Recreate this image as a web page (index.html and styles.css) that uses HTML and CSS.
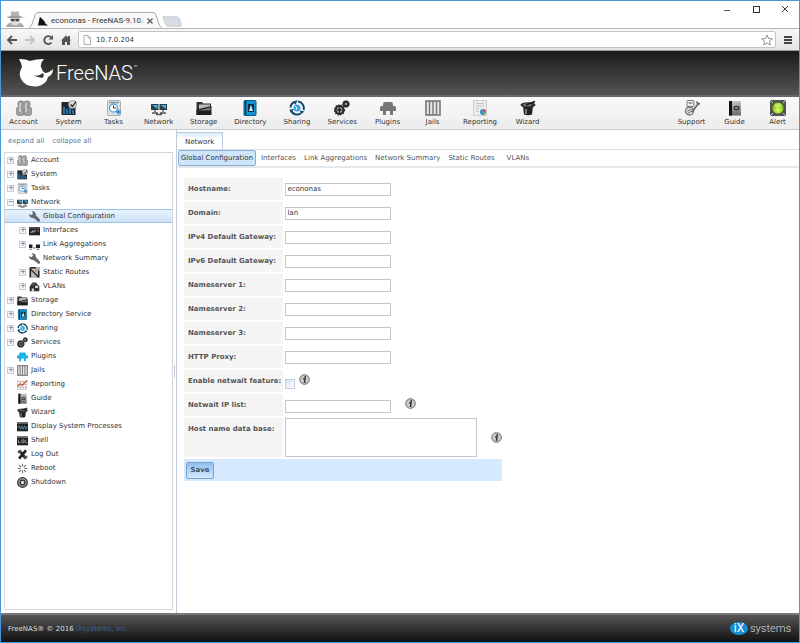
FILE: index.html
```html
<!DOCTYPE html>
<html lang="en">
  <head>
    <meta charset="UTF-8" />
    <meta name="viewport" content="width=device-width, initial-scale=1.0" />
    <title>econonas - FreeNAS-9.10</title>
    <link rel="stylesheet" href="styles.css">
  </head>
  <body>
    <!-- icon set -->
    <svg class="icon-set" xmlns="http://www.w3.org/2000/svg">
      <defs>
        <linearGradient id="steel" x1="0" y1="0" x2="0" y2="1">
          <stop offset="0" stop-color="#c4c4c4" />
          <stop offset="1" stop-color="#666" />
        </linearGradient>
        <radialGradient id="lime" cx="0.5" cy="0.65" r="0.6">
          <stop offset="0" stop-color="#e3ff6a" />
          <stop offset="1" stop-color="#5fae00" />
        </radialGradient>
      </defs>
      <symbol id="i-account" viewBox="0 0 16 16">
        <g fill="#a0a0a0" stroke="#757575" stroke-width="0.6">
          <circle cx="5" cy="4" r="3.3" />
          <circle cx="11" cy="4" r="3.3" />
          <rect x="0.5" y="7" width="7.5" height="8.5" rx="2" />
          <rect x="8" y="7" width="7.5" height="8.5" rx="2" />
        </g>
        <path d="M4 3v9M10 3v9" stroke="#d6d6d6" stroke-width="1.5" />
      </symbol>
      <symbol id="i-system" viewBox="0 0 16 16">
        <rect x="0.5" y="2" width="14" height="13" fill="#1d2a33" />
        <path d="M3 14V7M6 14V9M9 14V7M12 14v-4" stroke="#2f87c4" stroke-width="1.6" />
        <circle cx="11.5" cy="4.5" r="4" fill="#ddd" stroke="#777" stroke-width="0.7" />
        <path d="M9.5 4.5l2 2 3.5-5" fill="none" stroke="#222" stroke-width="1.3" />
      </symbol>
      <symbol id="i-tasks" viewBox="0 0 16 16">
        <rect x="1.5" y="0.5" width="13" height="15" rx="1" fill="#dbe2e5" stroke="#a9b1b5" />
        <path d="M3 2.5h10" stroke="#8a9499" stroke-width="1.4" />
        <circle cx="7.5" cy="8" r="4" fill="#fff" stroke="#5ba2d2" stroke-width="1.3" />
        <path d="M7.5 5.500V8H10" fill="none" stroke="#333" />
        <path d="M10 12h5M12.5 9.500v5" stroke="#2b86cc" stroke-width="1.6" />
      </symbol>
      <symbol id="i-network" viewBox="0 0 16 16">
        <rect x="0" y="4" width="7.5" height="6" fill="#2d3b45" />
        <rect x="8.5" y="4" width="7.5" height="6" fill="#2d3b45" />
        <path d="M1 5h5.500v4zM9.500 5H15v4z" fill="#38b2ec" />
        <path d="M3 10h2v2H3zM11 10h2v2h-2z" fill="#888" />
        <path d="M1 13h6M9 13h6M5 14.500h6" stroke="#555" stroke-width="1.5" />
      </symbol>
      <symbol id="i-storage" viewBox="0 0 16 16">
        <path d="M0.500 2H6l1 1.500h8V15H0.500z" fill="#333" />
        <path d="M3 4.500h11V10H3z" fill="#bcbcbc" />
        <path d="M0.500 15V9.500L15.500 6v9z" fill="#1e1e1e" />
        <path d="M1.500 10.500l13-3v3z" fill="#777" />
      </symbol>
      <symbol id="i-directory" viewBox="0 0 16 16">
        <rect x="2" y="0.5" width="12" height="15" rx="1" fill="#1591cf" stroke="#075b86" />
        <path d="M3.500 1v14" stroke="#063e5b" stroke-width="1.5" />
        <rect x="6" y="4" width="6" height="8" fill="#0d2c3c" />
        <path d="M9 4.500L7 11h4z" fill="#c7ecfb" />
      </symbol>
      <symbol id="i-sharing" viewBox="0 0 16 16">
        <path d="M9 1.500a6.500 6.500 0 0 1 5.500 8.500M11.500 13.500a6.500 6.500 0 0 1-9.500-3M1.500 7.500A6.500 6.500 0 0 1 5.500 2" fill="none" stroke="#124a68" stroke-width="2" />
        <path d="M8.500 0L4.500 1.500l2 3.500zM15.500 11.500l-4 3-.5-4zM.5 9.500L5 9l-3 4z" fill="#124a68" />
        <circle cx="8" cy="8" r="3.5" fill="#37a5e2" />
        <path d="M6 6l2 2-1 2" stroke="#e9f7ff" fill="none" />
      </symbol>
      <symbol id="i-services" viewBox="0 0 16 16">
        <g fill="#999" stroke="#2a2a2a">
          <circle cx="5.5" cy="10" r="4" stroke-width="2" />
          <circle cx="5.5" cy="10" r="5" fill="none" stroke-width="1.2" stroke-dasharray="1.5 1.2" />
          <circle cx="12" cy="4" r="2.3" stroke-width="2" />
          <circle cx="12" cy="4" r="3.3" fill="none" stroke-width="1" stroke-dasharray="1.3 1" />
        </g>
        <path d="M5.500 6.500v7M2 10h7" stroke="#333" />
        <circle cx="5.5" cy="10" r="1.4" fill="#222" />
      </symbol>
      <symbol id="i-plugins" viewBox="0 0 16 16">
        <path d="M3 4q0-2 2-2h6q2 0 2 2v2h2q1 0 1 2v3h-3v4h-3v-4H6v4H3v-4H0V8q0-2 1-2h2z" fill="currentColor" />
      </symbol>
      <symbol id="i-jails" viewBox="0 0 16 16">
        <rect x="1" y="1" width="14" height="14" fill="#e7e7e7" stroke="#777" stroke-width="1.6" />
        <path d="M4.500 1v14M8 1v14M11.500 1v14" stroke="#777" stroke-width="1.4" />
      </symbol>
      <symbol id="i-reporting" viewBox="0 0 16 16">
        <rect x="1.5" y="0.5" width="13" height="15" fill="#ececec" stroke="#cdcdcd" />
        <path d="M4 3.500h8M4 6h8M4 8.500h3M4 11h3" stroke="#c3c3c3" />
        <circle cx="11" cy="12" r="3" fill="#3c8bd6" />
        <path d="M11 12V9a3 3 0 0 1 3 3z" fill="#e4572e" />
        <path d="M11 12h3a3 3 0 0 1-3 3z" fill="#6bb536" />
      </symbol>
      <symbol id="i-chart" viewBox="0 0 16 16">
        <path d="M1 1v14h14M5 2v13M9 2v13M13 2v13M1 4h14M1 8h14M1 12h14" fill="none" stroke="#9b9b9b" stroke-width="0.8" />
        <path d="M0.500 11L4.500 7l3 2L15 2" fill="none" stroke="#d64b36" stroke-width="1.6" />
      </symbol>
      <symbol id="i-wizard" viewBox="0 0 16 16">
        <path d="M3 6h10l-1 8.500q-4 1.500-8 0z" fill="#222" />
        <path d="M6 9v5" stroke="#999" stroke-width="1.5" />
        <ellipse cx="8" cy="5" rx="7.5" ry="2.7" fill="#333" />
        <ellipse cx="7.5" cy="4.8" rx="4" ry="1.2" fill="#888" />
        <path d="M6 5L15 1.500" stroke="#111" stroke-width="1.6" />
      </symbol>
      <symbol id="i-support" viewBox="0 0 16 16">
        <rect x="3" y="0.5" width="7" height="6" rx="1" fill="#eee" stroke="#777" />
        <path d="M4.500 3h4" stroke="#555" />
        <circle cx="5.5" cy="11" r="4" fill="#ddd" stroke="#777" stroke-width="1.3" />
        <path d="M3.500 11l4-2M4 13l4-2" stroke="#777" />
        <path d="M8 12l6-8M13 1.500q0 3 3 2" fill="none" stroke="#666" stroke-width="1.8" />
      </symbol>
      <symbol id="i-guide" viewBox="0 0 16 16">
        <rect x="2" y="1" width="12" height="14.5" fill="url(#steel)" />
        <path d="M3.500 1v14.500" stroke="#111" stroke-width="3" />
        <ellipse cx="9.5" cy="8" rx="3" ry="2.3" fill="#333" />
        <path d="M8 8h3" stroke="#ddd" />
      </symbol>
      <symbol id="i-alert" viewBox="0 0 16 16">
        <rect width="16" height="16" fill="#555" />
        <path d="M0 0l3 3M16 0l-3 3M0 16l3-3M16 16l-3-3" stroke="#ccc" />
        <circle cx="8" cy="8" r="6.2" fill="url(#lime)" stroke="#444" />
        <ellipse cx="8" cy="5" rx="3.5" ry="2" fill="#e4f9a0" opacity="0.6" />
      </symbol>
      <symbol id="i-wrench" viewBox="0 0 16 16">
        <path d="M0 4.500l3 1.500L6 4 4 .5Q10 0 10 6l5.500 6q1.500 3-1.500 4L7 10.500Q0 10.500 0 4.500z" fill="#666" />
      </symbol>
      <symbol id="i-interfaces" viewBox="0 0 16 16">
        <rect y="3" width="16" height="12" fill="#222" />
        <path d="M0 4.500h16" stroke="#888" />
        <path d="M2 10.500h3V8M7 11V8.500h3M12 8.500h2" fill="none" stroke="#ddd" stroke-width="1.2" />
      </symbol>
      <symbol id="i-link" viewBox="0 0 16 16">
        <path d="M0 8h5v5H0zM10 8h6v5h-6z" fill="#222" />
        <path d="M1 15h3M11 15h4M6 13h3" stroke="#555" stroke-width="1.5" />
      </symbol>
      <symbol id="i-routes" viewBox="0 0 16 16">
        <rect width="16" height="16" fill="#bbb" />
        <path d="M1 2l13 13M2 1h8M2 3v12M14 5v9" stroke="#222" stroke-width="2" />
        <path d="M8 8l5-6" stroke="#c44" />
      </symbol>
      <symbol id="i-vlans" viewBox="0 0 16 16">
        <path d="M1 8l4-6h5l5 6v7H1z" fill="#333" />
        <path d="M4 15v-4h3v4M9 7h4v3H9z" fill="#ddd" />
        <path d="M5 5l3-1" stroke="#aaa" />
      </symbol>
      <symbol id="i-processes" viewBox="0 0 16 16">
        <rect y="2" width="16" height="13" fill="#222" />
        <path d="M0 3.500h16" stroke="#888" />
        <path d="M1 10l2-3 2 5 2-5 2 5 2-5 2 5 2-4" fill="none" stroke="#4f9fae" stroke-width="1.2" />
      </symbol>
      <symbol id="i-shell" viewBox="0 0 16 16">
        <rect y="2" width="16" height="13" fill="#222" />
        <path d="M0 3.500h16" stroke="#999" />
        <path d="M2 7v4h3M7 7h3v4H7zM12 7v4h3" fill="none" stroke="#bbb" />
      </symbol>
      <symbol id="i-logout" viewBox="0 0 16 16">
        <path d="M3 2l10 12M13 2L3 14" stroke="#222" stroke-width="4" />
        <path d="M1 5l5-2M10 13l5-2" stroke="#555" stroke-width="3" />
      </symbol>
      <symbol id="i-reboot" viewBox="0 0 16 16">
        <path d="M8 1v4M8 11v4M1 8h4M11 8h4M3 3l3 3M10 10l3 3M13 3l-3 3M6 10l-3 3" stroke="#666" stroke-width="1.5" />
      </symbol>
      <symbol id="i-shutdown" viewBox="0 0 16 16">
        <circle cx="8" cy="8" r="7" fill="#aaa" stroke="#333" stroke-width="1.8" />
        <circle cx="8" cy="8" r="3.5" fill="#ddd" stroke="#333" stroke-width="2" />
      </symbol>
      <symbol id="i-info" viewBox="0 0 16 16">
        <circle cx="8" cy="8" r="7" fill="#c9c9c9" stroke="#6a6a6a" stroke-width="1.4" />
        <circle cx="9" cy="4.3" r="1.3" fill="#222" />
        <path d="M6 7h3l-1.200 5h2" fill="none" stroke="#222" stroke-width="1.7" />
      </symbol>
    </svg>

    <div class="window">
      <header class="titlebar">
        <svg class="incognito" viewBox="0 0 24 20">
          <path d="M2 19q1-4 6-5h8q5 1 6 5z" fill="#a9a9a9" />
          <circle cx="12" cy="11" r="6" fill="#dedede" />
          <path d="M7 7l1-6q4 2 8 0l1 6z" fill="#b5b5b5" />
          <path d="M2 8q10-3 20 0-10 3-20 0z" fill="#9c9c9c" />
          <path d="M7 10h4.500v2.500H8zM12.500 10H17l-1 2.500h-3.500z" fill="#444" />
        </svg>
        <div class="browser-tab">
          <svg class="tab-edge" viewBox="0 0 9 16" preserveAspectRatio="none">
            <path d="M0 15.500Q2 15 3 12L6 3Q7 .5 9 .5V16H0z" fill="#f8f8f8" />
            <path d="M0 15.500Q2 15 3 12L6 3Q7 .5 9 .5" fill="none" stroke="#aaa" />
          </svg>
          <div class="tab-body">
            <svg class="favicon" viewBox="0 0 16 16"><path d="M0 15L3 1l7 7 2 4 4 3z" fill="#111" /></svg>
            <span class="tab-title">econonas - FreeNAS-9.10.</span>
            <button class="icon-button tab-close" aria-label="Close tab">
              <svg viewBox="0 0 8 8"><path d="M1.500 1.500l5 5M6.500 1.500l-5 5" stroke="#555" stroke-width="1.2" /></svg>
            </button>
          </div>
          <svg class="tab-edge flip" viewBox="0 0 9 16" preserveAspectRatio="none">
            <path d="M0 15.500Q2 15 3 12L6 3Q7 .5 9 .5V16H0z" fill="#f8f8f8" />
            <path d="M0 15.500Q2 15 3 12L6 3Q7 .5 9 .5" fill="none" stroke="#aaa" />
          </svg>
        </div>
        <button class="new-tab" aria-label="New tab">
          <svg viewBox="0 0 20 11"><path d="M1 .5h14q2 0 3 3l1.500 5q.5 2-1.500 2H6q-2 0-3-3L1 2z" fill="#d5dce4" stroke="#c6ccd4" stroke-width="0.7" /></svg>
        </button>
        <div class="window-controls">
          <button class="icon-button" aria-label="Minimize"><svg viewBox="0 0 8 8"><path d="M1 5.500h6" stroke="#555" /></svg></button>
          <button class="icon-button" aria-label="Maximize"><svg viewBox="0 0 8 8"><rect x="1.5" y="1.5" width="6" height="6" fill="none" stroke="#333" /></svg></button>
          <button class="icon-button" aria-label="Close"><svg viewBox="0 0 8 8"><path d="M1 1l6 6M7 1L1 7" stroke="#333" /></svg></button>
        </div>
      </header>

      <div class="toolbar">
        <button class="icon-button" aria-label="Back"><svg viewBox="0 0 12 12"><path d="M11 6H2M6 2L2 6l4 4" fill="none" stroke="#555" stroke-width="1.9" /></svg></button>
        <button class="icon-button" aria-label="Forward"><svg viewBox="0 0 12 12"><path d="M1 6h9M6 2l4 4-4 4" fill="none" stroke="#c4c4c4" stroke-width="1.9" /></svg></button>
        <button class="icon-button" aria-label="Reload"><svg viewBox="0 0 12 12"><path d="M9.500 8.500A4 4 0 1 1 9 3.200" fill="none" stroke="#555" stroke-width="1.9" /><path d="M11 1v4.500H6.500z" fill="#555" /></svg></button>
        <button class="icon-button" aria-label="Home"><svg viewBox="0 0 12 12"><path d="M1 6.500L6 1.500l2 2V2h2v3.500l1 1H10V11H7V8H5v3H2V6.500z" fill="#555" /></svg></button>
        <div class="address">
          <svg class="page-icon" viewBox="0 0 8 10"><path d="M1 .5h4l2.500 2.500v6.500H1zM5 .5V3h2.500" fill="#fff" stroke="#999" stroke-width="0.8" /></svg>
          <input type="text" aria-label="Address" value="10.7.0.204">
          <svg class="star" viewBox="0 0 12 12"><path d="M6 1l1.500 3.500 3.800.3-2.900 2.500.9 3.700L6 9l-3.300 2 .9-3.700L.7 4.800l3.800-.3z" fill="#fff" stroke="#888" stroke-width="0.9" /></svg>
        </div>
        <button class="icon-button" aria-label="Menu"><svg viewBox="0 0 12 12"><path d="M2 3h8M2 6h8M2 9h8" stroke="#444" stroke-width="1.8" /></svg></button>
      </div>

      <div class="banner">
        <svg class="shark" viewBox="0 0 35 28">
          <path d="M0 0Q7 0 11 2 17 0 25 0 21 4 22 8 23 12 26 14 30 14 34 10 34 16 29 18 27 26 18 27.500 6 28 2 20-1 14 3 8 2 3 0 0z" fill="#fff" />
          <path d="M15 16q4 2 9-2 2 3-1 5l-4-1q-2 0-4-2z" fill="#383838" />
        </svg>
        <span class="brand">FreeNAS</span><sup class="tm">™</sup>
      </div>

      <nav class="menu">
        <a href="#"><svg><use href="#i-account" /></svg>Account</a>
        <a href="#"><svg><use href="#i-system" /></svg>System</a>
        <a href="#"><svg><use href="#i-tasks" /></svg>Tasks</a>
        <a href="#"><svg><use href="#i-network" /></svg>Network</a>
        <a href="#"><svg><use href="#i-storage" /></svg>Storage</a>
        <a href="#"><svg><use href="#i-directory" /></svg>Directory</a>
        <a href="#"><svg><use href="#i-sharing" /></svg>Sharing</a>
        <a href="#"><svg><use href="#i-services" /></svg>Services</a>
        <a href="#"><svg class="grey"><use href="#i-plugins" /></svg>Plugins</a>
        <a href="#"><svg><use href="#i-jails" /></svg>Jails</a>
        <a href="#"><svg><use href="#i-reporting" /></svg>Reporting</a>
        <a href="#"><svg><use href="#i-wizard" /></svg>Wizard</a>
        <div class="menu-right">
          <a href="#"><svg><use href="#i-support" /></svg>Support</a>
          <a href="#"><svg><use href="#i-guide" /></svg>Guide</a>
          <a href="#"><svg><use href="#i-alert" /></svg>Alert</a>
        </div>
      </nav>

      <div class="main">
        <aside class="sidebar">
          <div class="tree-links">
            <a href="#">expand all</a>
            <a href="#">collapse all</a>
          </div>
          <ul class="tree">
            <li><div class="row"><button class="toggle">+</button><svg><use href="#i-account" /></svg>Account</div></li>
            <li><div class="row"><button class="toggle">+</button><svg><use href="#i-system" /></svg>System</div></li>
            <li><div class="row"><button class="toggle">+</button><svg><use href="#i-tasks" /></svg>Tasks</div></li>
            <li>
              <div class="row"><button class="toggle">−</button><svg><use href="#i-network" /></svg>Network</div>
              <ul>
                <li><div class="row selected"><span class="spacer"></span><svg><use href="#i-wrench" /></svg>Global Configuration</div></li>
                <li><div class="row"><button class="toggle">+</button><svg><use href="#i-interfaces" /></svg>Interfaces</div></li>
                <li><div class="row"><button class="toggle">+</button><svg><use href="#i-link" /></svg>Link Aggregations</div></li>
                <li><div class="row"><span class="spacer"></span><svg><use href="#i-wrench" /></svg>Network Summary</div></li>
                <li><div class="row"><button class="toggle">+</button><svg><use href="#i-routes" /></svg>Static Routes</div></li>
                <li><div class="row"><button class="toggle">+</button><svg><use href="#i-vlans" /></svg>VLANs</div></li>
              </ul>
            </li>
            <li><div class="row"><button class="toggle">+</button><svg><use href="#i-storage" /></svg>Storage</div></li>
            <li><div class="row"><button class="toggle">+</button><svg><use href="#i-directory" /></svg>Directory Service</div></li>
            <li><div class="row"><button class="toggle">+</button><svg><use href="#i-sharing" /></svg>Sharing</div></li>
            <li><div class="row"><button class="toggle">+</button><svg><use href="#i-services" /></svg>Services</div></li>
            <li><div class="row"><span class="spacer"></span><svg class="cyan"><use href="#i-plugins" /></svg>Plugins</div></li>
            <li><div class="row"><button class="toggle">+</button><svg><use href="#i-jails" /></svg>Jails</div></li>
            <li><div class="row"><span class="spacer"></span><svg><use href="#i-chart" /></svg>Reporting</div></li>
            <li><div class="row"><span class="spacer"></span><svg><use href="#i-guide" /></svg>Guide</div></li>
            <li><div class="row"><span class="spacer"></span><svg><use href="#i-wizard" /></svg>Wizard</div></li>
            <li><div class="row"><span class="spacer"></span><svg><use href="#i-processes" /></svg>Display System Processes</div></li>
            <li><div class="row"><span class="spacer"></span><svg><use href="#i-shell" /></svg>Shell</div></li>
            <li><div class="row"><span class="spacer"></span><svg><use href="#i-logout" /></svg>Log Out</div></li>
            <li><div class="row"><span class="spacer"></span><svg><use href="#i-reboot" /></svg>Reboot</div></li>
            <li><div class="row"><span class="spacer"></span><svg><use href="#i-shutdown" /></svg>Shutdown</div></li>
          </ul>
        </aside>
        <div class="splitter"></div>

        <section class="content">
          <div class="tabs"><a href="#" class="tab">Network</a></div>
          <nav class="subtabs">
            <a href="#" class="active">Global Configuration</a>
            <a href="#">Interfaces</a>
            <a href="#">Link Aggregations</a>
            <a href="#">Network Summary</a>
            <a href="#">Static Routes</a>
            <a href="#" class="short">VLANs</a>
          </nav>
          <form>
            <table>
              <tr>
                <th><label for="hostname">Hostname:</label></th>
                <td><input type="text" id="hostname" value="econonas"></td>
              </tr>
              <tr>
                <th><label for="domain">Domain:</label></th>
                <td><input type="text" id="domain" class="focused" value="lan"></td>
              </tr>
              <tr>
                <th><label for="ipv4">IPv4 Default Gateway:</label></th>
                <td><input type="text" id="ipv4"></td>
              </tr>
              <tr>
                <th><label for="ipv6">IPv6 Default Gateway:</label></th>
                <td><input type="text" id="ipv6"></td>
              </tr>
              <tr>
                <th><label for="ns1">Nameserver 1:</label></th>
                <td><input type="text" id="ns1"></td>
              </tr>
              <tr>
                <th><label for="ns2">Nameserver 2:</label></th>
                <td><input type="text" id="ns2"></td>
              </tr>
              <tr>
                <th><label for="ns3">Nameserver 3:</label></th>
                <td><input type="text" id="ns3"></td>
              </tr>
              <tr>
                <th><label for="proxy">HTTP Proxy:</label></th>
                <td><input type="text" id="proxy"></td>
              </tr>
              <tr>
                <th><label for="netwait">Enable netwait feature:</label></th>
                <td><div class="field tight"><input type="checkbox" id="netwait"><svg class="info"><use href="#i-info" /></svg></div></td>
              </tr>
              <tr>
                <th><label for="netwaitip">Netwait IP list:</label></th>
                <td><div class="field"><input type="text" id="netwaitip"><svg class="info"><use href="#i-info" /></svg></div></td>
              </tr>
              <tr class="tall">
                <th><label for="hosts">Host name data base:</label></th>
                <td><div class="field middle"><textarea id="hosts"></textarea><svg class="info"><use href="#i-info" /></svg></div></td>
              </tr>
              <tr>
                <td colspan="2" class="actions"><button type="submit">Save</button></td>
              </tr>
            </table>
          </form>
        </section>
      </div>

      <footer class="footer">
        <span>FreeNAS® © 2016 <a href="#">iXsystems, Inc.</a></span>
        <span class="ix-logo"><span class="ix">iX</span><span class="systems">systems</span></span>
      </footer>
    </div>
  </body>
</html>
```
FILE: styles.css
```css
* {
  box-sizing: border-box;
}
body {
  margin: 0;
  font-family: "DejaVu Sans", Verdana, sans-serif;
  font-size: 7px;
  line-height: 10px;
  color: #333;
  background-color: #fff;
}
a {
  color: inherit;
  text-decoration: none;
}
svg {
  display: block;
  flex: none;
}
button {
  padding: 0;
  border: none;
  background: none;
  font: inherit;
  cursor: pointer;
}
ul {
  list-style: none;
  margin: 0;
  padding: 0;
}
.icon-set {
  position: absolute;
  width: 0;
  height: 0;
}
.window {
  min-height: 100vh;
  display: flex;
  flex-direction: column;
  border: 1px solid #4698dc;
}

/* browser chrome */
.titlebar {
  display: flex;
  align-items: flex-end;
  height: 27px;
  padding-left: 3px;
}
.incognito {
  width: 22px;
  height: 18px;
}
.browser-tab {
  display: flex;
  height: 16px;
  margin-left: 3px;
}
.tab-edge {
  width: 9px;
  height: 16px;
}
.flip {
  transform: scaleX(-1);
}
.tab-body {
  display: flex;
  align-items: center;
  width: 115px;
  gap: 3px;
  border-top: 1px solid #aaa;
  background-color: #f8f8f8;
}
.favicon {
  width: 10px;
  height: 10px;
}
.tab-title {
  flex: 1;
  white-space: nowrap;
  font-family: Roboto, sans-serif;
  font-size: 8px;
}
.icon-button svg {
  width: 12px;
  height: 12px;
}
.tab-close svg {
  width: 8px;
  height: 8px;
}
.new-tab {
  padding-bottom: 1px;
}
.new-tab svg {
  width: 20px;
  height: 11px;
}
.window-controls {
  display: flex;
  align-self: flex-start;
  gap: 21px;
  margin-left: auto;
  padding: 4px 10px 0 0;
}
.window-controls svg {
  width: 8px;
  height: 8px;
}
.toolbar {
  display: flex;
  align-items: center;
  gap: 6px;
  height: 23px;
  padding: 0 5px;
  border-top: 1px solid #b5b5b5;
  border-bottom: 1px solid #999;
  background: linear-gradient(#f8f8f8, #e4e4e4);
}
.address {
  display: flex;
  flex: 1;
  align-items: center;
  gap: 4px;
  height: 17px;
  padding: 0 2px 0 4px;
  border: 1px solid #c4c4c4;
  border-radius: 2px;
  background-color: #fff;
}
.address input {
  flex: 1;
  padding: 0;
  border: none;
  outline: none;
  font-family: "Open Sans", sans-serif;
  font-size: 10px;
  color: #222;
}
.page-icon {
  width: 8px;
  height: 10px;
}
.star {
  width: 12px;
  height: 12px;
}

/* header */
.banner {
  display: flex;
  align-items: center;
  height: 46px;
  padding-left: 18px;
  border-bottom: 2px solid #66666c;
  background: linear-gradient(#1b1b1b, #545454);
  color: #fff;
}
.shark {
  width: 35px;
  height: 28px;
}
.brand {
  margin-left: 2px;
  font-family: Roboto, sans-serif;
  font-size: 20px;
  font-weight: 300;
  line-height: 28px;
}
.tm {
  align-self: flex-start;
  margin-top: 12px;
  font-size: 5px;
  line-height: 8px;
}
.menu {
  display: flex;
  height: 33px;
  padding-top: 3px;
  border-bottom: 1px solid #c8c9d4;
  background: linear-gradient(#fafafa, #ececec);
}
.menu a {
  display: flex;
  flex-direction: column;
  align-items: center;
  gap: 1px;
  min-width: 45px;
  padding: 0 8px;
}
.menu svg {
  width: 16px;
  height: 16px;
}
.menu-right {
  display: flex;
  margin-left: auto;
}
.menu-right a {
  min-width: 43px;
  padding: 0 7px;
}
.grey {
  color: #777;
}
.cyan {
  color: #1cb4ea;
}

/* tree */
.main {
  display: flex;
  flex: 1;
}
.sidebar {
  display: flex;
  flex-direction: column;
  width: 172px;
  padding: 0 0 3px 3px;
}
.tree-links {
  display: flex;
  gap: 8px;
  height: 22px;
  padding: 6px 4px;
  color: #5a7a9c;
}
.tree {
  flex: 1;
  border: 1px solid #d3d6dc;
}
.row {
  display: flex;
  align-items: center;
  gap: 3px;
  height: 14px;
  padding-left: 2px;
}
.tree ul .row {
  padding-left: 14px;
}
.row svg {
  width: 11px;
  height: 11px;
}
.row.selected {
  border: solid #9fc3e2;
  border-width: 1px 0;
  background: linear-gradient(#e9f3fc, #cde3f8);
}
.toggle,
.spacer {
  width: 7px;
  height: 7px;
}
.toggle {
  border: 1px solid #c3cbdd;
  background-color: #f4f7fc;
  color: #4a5f8a;
  line-height: 5px;
}
.splitter {
  align-self: center;
  width: 1px;
  height: 13px;
  margin: 0 1px;
  background-color: #c3cbd8;
}

/* content pane */
.content {
  flex: 1;
  border-left: 1px solid #c3cbd8;
}
.tabs {
  display: flex;
  height: 20px;
  padding-top: 2px;
  border-bottom: 1px solid #dcdee6;
}
.tab {
  padding: 4px 8px;
  border: 1px solid #b9cbdf;
  border-left: none;
  border-bottom: none;
  background: linear-gradient(#dcebf9, #fff 6px);
}
.subtabs {
  display: flex;
  align-items: center;
  gap: 2px;
  height: 18px;
  padding-left: 1px;
  border-bottom: 2px solid #e6e7ee;
  color: #555;
}
.subtabs a {
  padding: 2px;
  border: 1px solid transparent;
  border-radius: 2px;
}
.subtabs .active {
  border-color: #84afd6;
  background-color: #cfe5fa;
  color: #333;
}
.subtabs .short {
  margin-left: 4px;
}
form {
  padding: 8px 5px;
}
table {
  border-spacing: 2px;
}
tr {
  height: 22px;
}
.tall {
  height: 39px;
}
th,
td {
  padding: 0;
}
th {
  width: 99px;
  padding: 6px 2px 6px 4px;
  background-color: #f5f5f5;
  text-align: left;
  vertical-align: top;
  color: #555;
  white-space: nowrap;
}
input[type="text"],
textarea {
  display: block;
  padding: 0 1px;
  font: inherit;
  color: inherit;
}
td input[type="text"],
textarea {
  width: 106px;
  height: 13px;
  border: 1px solid #c4c6d2;
}
td .focused {
  border-color: #9bbedd;
}
td textarea {
  width: 192px;
  height: 39px;
  resize: none;
}
.field {
  display: flex;
  align-items: flex-end;
  gap: 14px;
  width: 217px;
}
.field.tight {
  gap: 4px;
}
.field.middle {
  align-items: center;
}
.field .info {
  width: 11px;
  height: 11px;
  margin-bottom: 4px;
}
.field.middle .info {
  margin: 0;
}
input[type="checkbox"] {
  appearance: none;
  width: 10px;
  height: 10px;
  margin: 0;
  border: 1px solid #c4cbda;
  background: linear-gradient(135deg, #d3e4f5, #fff);
}
.actions {
  padding-left: 2px;
  background-color: #d6eaff;
}
.actions button {
  display: block;
  width: 28px;
  height: 17px;
  border: 1px solid #7ba3ca;
  border-radius: 2px;
  background: linear-gradient(#8fc1f2, #d3e8fc);
  font-weight: bold;
  color: #456;
}

/* footer */
.footer {
  display: flex;
  align-items: center;
  justify-content: space-between;
  height: 29px;
  padding: 0 8px 0 7px;
  border-top: 2px solid #77777c;
  background: linear-gradient(#555, #111);
  color: #ddd;
}
.footer a {
  color: #3a6594;
}
.ix-logo {
  display: flex;
  align-items: center;
  gap: 2px;
  font-family: Roboto, sans-serif;
}
.ix {
  width: 18px;
  height: 13px;
  border-radius: 50%;
  background-color: #1590d8;
  color: #fff;
  font-size: 12px;
  line-height: 13px;
  text-align: center;
}
.systems {
  font-size: 11px;
  font-weight: 300;
}
```
